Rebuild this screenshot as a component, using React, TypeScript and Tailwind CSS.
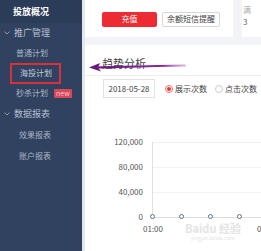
const MENU = [
  { label: "普通计划" },
  { label: "海投计划", boxed: true },
  { label: "秒杀计划", badge: "new" },
];

const REPORTS = ["效果报表", "账户报表"];

const Y_TICKS = ["120,000", "80,000", "40,000", "0"];

function Chevron() {
  return (
    <svg width="6" height="4" viewBox="0 0 6 4" className="mr-[4px]">
      <path d="M0.5 0.5 L3 3 L5.5 0.5" fill="none" stroke="#8b97ab" strokeWidth="1" />
    </svg>
  );
}

function Sidebar() {
  return (
    <div className="flex w-[82px] shrink-0 flex-col bg-[#30425f] text-[8px] leading-[10px] text-[#a9b4c6]">
      <div className="flex h-[23px] items-center bg-[#2b3c58] pl-[13px] pt-[1px] text-[9px] font-bold text-white">
        投放概况
      </div>
      <div className="flex h-[20px] items-center pl-[4px] text-[9px] text-[#b4bfd0]">
        <Chevron />
        推广管理
      </div>
      {MENU.map((m) => (
        <div key={m.label} className="flex h-[20px] items-center pl-[16px]">
          {m.boxed ? (
            <span className="-ml-[6px] flex h-[21px] w-[51px] items-center border-2 border-[#d9303e] pl-[8px] text-[#c4ccd9]">
              {m.label}
            </span>
          ) : (
            <span>{m.label}</span>
          )}
          {m.badge && (
            <span className="ml-[6px] rounded-[1px] bg-[#d9475a] px-[2px] text-[7px] leading-[9px] text-[#f4c4cc]">
              {m.badge}
            </span>
          )}
        </div>
      ))}
      <div className="flex h-[21px] items-center pl-[4px] text-[9px] text-[#b4bfd0]">
        <Chevron />
        数据报表
      </div>
      {REPORTS.map((r) => (
        <div key={r} className="flex h-[21px] items-center pl-[19px]">
          {r}
        </div>
      ))}
    </div>
  );
}

function Chart() {
  return (
    <div className="relative mt-[44px] h-[100px]">
      <div className="absolute left-0 top-0 flex h-[75px] w-[58px] flex-col justify-between text-right text-[8px] leading-[10px] text-[#555]">
        {Y_TICKS.map((t) => (
          <div key={t} className="h-0">
            <div className="-translate-y-1/2">{t}</div>
          </div>
        ))}
      </div>
      <div className="absolute left-[67px] right-0 top-0 h-[75px] border-l border-[#e0e0e0]">
        {[0, 1, 2].map((i) => (
          <div key={i} className="h-[25px] border-t border-[#f2f2f2]" />
        ))}
        <div className="border-t border-[#dddddd]" />
      </div>
      <div className="absolute left-[65px] top-[72px] flex gap-[24px]">
        {[0, 1, 2, 3, 4].map((i) => (
          <span key={i} className="h-[5px] w-[5px] rounded-full border border-[#5c7385] bg-white" />
        ))}
      </div>
      <div className="absolute left-[58px] top-[82px] text-[8px] leading-[10px] text-[#555]">01:00</div>
      <div className="absolute left-[172px] top-[82px] text-[8px] leading-[10px] text-[#555]">0</div>
      <div className="absolute left-[100px] top-[80px] flex flex-col items-center text-[#e4e4e4]">
        <span className="text-[11px] font-bold leading-[13px]">Baidu 经验</span>
        <span className="text-[5px] leading-[6px]">jingyan.baidu.com</span>
      </div>
    </div>
  );
}

export default function App() {
  return (
    <div
      className="flex h-[251px] w-[261px] overflow-hidden bg-[#f2f4f7]"
      style={{ fontFamily: '"Noto Sans CJK SC", "Liberation Sans", sans-serif' }}
    >
      <Sidebar />
      <div className="w-[3px] shrink-0 bg-[#e4e8ed]" />
      <div className="relative flex min-w-0 flex-1 flex-col">
        <div className="flex h-[37px] gap-[9px]">
          <div className="flex w-[148px] shrink-0 items-center gap-[5px] bg-white pl-[17px] pt-[1px]">
            <button className="h-[15px] w-[55px] rounded-[2px] bg-[#ee2b33] text-[8px] leading-[10px] text-white">
              充值
            </button>
            <button className="h-[15px] w-[58px] rounded-[2px] border border-[#d6d6d6] bg-white text-[8px] leading-[10px] text-[#444]">
              余额短信提醒
            </button>
          </div>
          <div className="flex-1 bg-white pl-[1px] pt-[4px] text-[8px] leading-[12px] text-[#aaa]">
            <div>满</div>
            <div className="text-[#666]">3</div>
          </div>
        </div>
        <div className="mt-[8px] flex-1 bg-white">
          <div className="flex h-[31px] items-end border-b border-[#efefef] pb-[5px] pl-[17px] text-[11px] leading-[13px] text-[#444]">
            趋势分析
          </div>
          <div className="mt-[3px] flex items-center pl-[18px] text-[8px] leading-[10px] text-[#444]">
            <div className="flex h-[19px] w-[52px] shrink-0 items-center justify-center border border-[#e2e2e2]">
              2018-05-28
            </div>
            <span className="ml-[10px] flex h-[8px] w-[8px] shrink-0 items-center justify-center rounded-full border border-[#f07070]">
              <span className="h-[4px] w-[4px] rounded-full bg-[#e8343c]" />
            </span>
            <span className="ml-[2px] whitespace-nowrap">展示次数</span>
            <span className="ml-[8px] h-[8px] w-[8px] shrink-0 rounded-full border border-[#cccccc]" />
            <span className="ml-[2px] whitespace-nowrap">点击次数</span>
            <span className="ml-[5px] h-[8px] w-[8px] shrink-0 rounded-full border border-[#cccccc]" />
          </div>
          <Chart />
        </div>
        <svg
          className="absolute left-[3px] top-[61px]"
          width="98"
          height="12"
          viewBox="0 0 98 12"
        >
          <defs>
            <linearGradient id="stroke" x1="0" x2="1" y1="0" y2="0">
              <stop offset="0" stopColor="#6a1a7e" />
              <stop offset="0.75" stopColor="#8a2a9c" />
              <stop offset="1" stopColor="#b070c0" stopOpacity="0.5" />
            </linearGradient>
          </defs>
          <path d="M6 6.5 C30 6 60 5 97 4.5" stroke="url(#stroke)" strokeWidth="2.2" fill="none" strokeLinecap="round" />
          <path d="M12 2 L1 6.5 L13 10.5 L10 6.5 Z" fill="#6a1a7e" />
        </svg>
      </div>
    </div>
  );
}
